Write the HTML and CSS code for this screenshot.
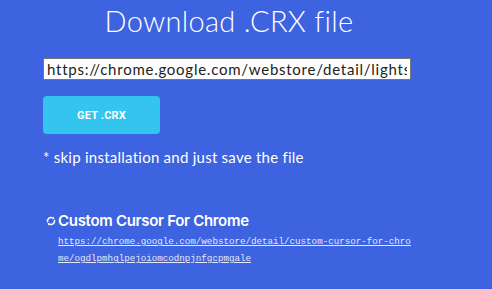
FILE: index.html
```html
<!DOCTYPE html>
<html lang="en">
  <head>
    <meta charset="UTF-8" />
    <meta name="viewport" content="width=device-width, initial-scale=1.0" />
    <title>Download .CRX file</title>
    <link rel="stylesheet" href="styles.css">
  </head>
  <body>
    <div class="main">
      <h1>Download .CRX file</h1>
      <form class="crx-form">
        <input type="text" class="url-input" value="https://chrome.google.com/webstore/detail/lightshot-screenshot-tool/mbniclmhobmnbdlbpiphghaielnnpgdp" />
        <button type="submit" class="get-btn">GET .CRX</button>
      </form>
      <p class="note">* skip installation and just save the file</p>

      <div class="recent">
        <h3 class="recent-title">
          <svg class="refresh-icon" viewBox="0 0 10 12" width="10" height="12">
            <path d="M1.71 7.2A3.5 3.5 0 0 1 6.75 2.97" fill="none" stroke="#fff" stroke-width="1.5"/>
            <path d="M8.29 4.8A3.5 3.5 0 0 1 3.25 9.03" fill="none" stroke="#fff" stroke-width="1.5"/>
            <path d="M8.31 3.87L5.95 4.36L7.55 1.58Z" fill="#fff"/>
            <path d="M1.69 8.13L4.05 7.64L2.45 10.42Z" fill="#fff"/>
          </svg>Custom Cursor For Chrome
        </h3>
        <a class="recent-link" href="#">https://chrome.google.com/webstore/detail/custom-cursor-for-chrome/ogdlpmhglpejoiomcodnpjnfgcpmgale</a>
      </div>
    </div>
  </body>
</html>
```

FILE: styles.css
```css
body {
  margin: 0;
  padding: 0;
  background: #3d63e0;
  font-family: "Lato", "Open Sans", sans-serif;
  color: #fff;
  height: 100vh;
  overflow: hidden;
}
.main {
  width: 372px;
  margin-left: 43px;
}
h1 {
  margin: 0;
  padding-top: 1px;
  text-align: center;
  font-weight: 300;
  font-size: 29px;
  line-height: 40px;
  letter-spacing: 0.3px;
}
.crx-form {
  margin-top: 17px;
}
.url-input {
  display: block;
  box-sizing: border-box;
  width: 368px;
  height: 22px;
  margin: 0;
  padding: 0 3px;
  border: 1px solid #777;
  background: #fff;
  font-family: "Lato", sans-serif;
  font-size: 15px;
  letter-spacing: 0.75px;
  color: #222;
}
.get-btn {
  display: block;
  margin-top: 16px;
  width: 117px;
  height: 38px;
  border: none;
  border-radius: 4px;
  background: #33c4f0;
  color: #fff;
  font-family: "Roboto", sans-serif;
  font-weight: bold;
  font-size: 11px;
  letter-spacing: 0.2px;
  cursor: pointer;
}
.note {
  margin: 13px 0 0;
  font-size: 15px;
  line-height: 20px;
  letter-spacing: 0.25px;
}
.recent {
  margin-top: 44px;
}
.recent-title {
  display: flex;
  align-items: center;
  margin: 0 0 0 3px;
  font-family: "Inter", sans-serif;
  font-weight: 600;
  font-size: 15px;
  line-height: 20px;
  letter-spacing: -0.3px;
}
.refresh-icon {
  margin-right: 2px;
}
.recent-link {
  display: block;
  margin: 2px 0 0 15px;
  width: 355px;
  word-break: break-all;
  font-family: "Liberation Mono", monospace;
  font-size: 9.2px;
  line-height: 17px;
  color: #e4e8fb;
}
```
